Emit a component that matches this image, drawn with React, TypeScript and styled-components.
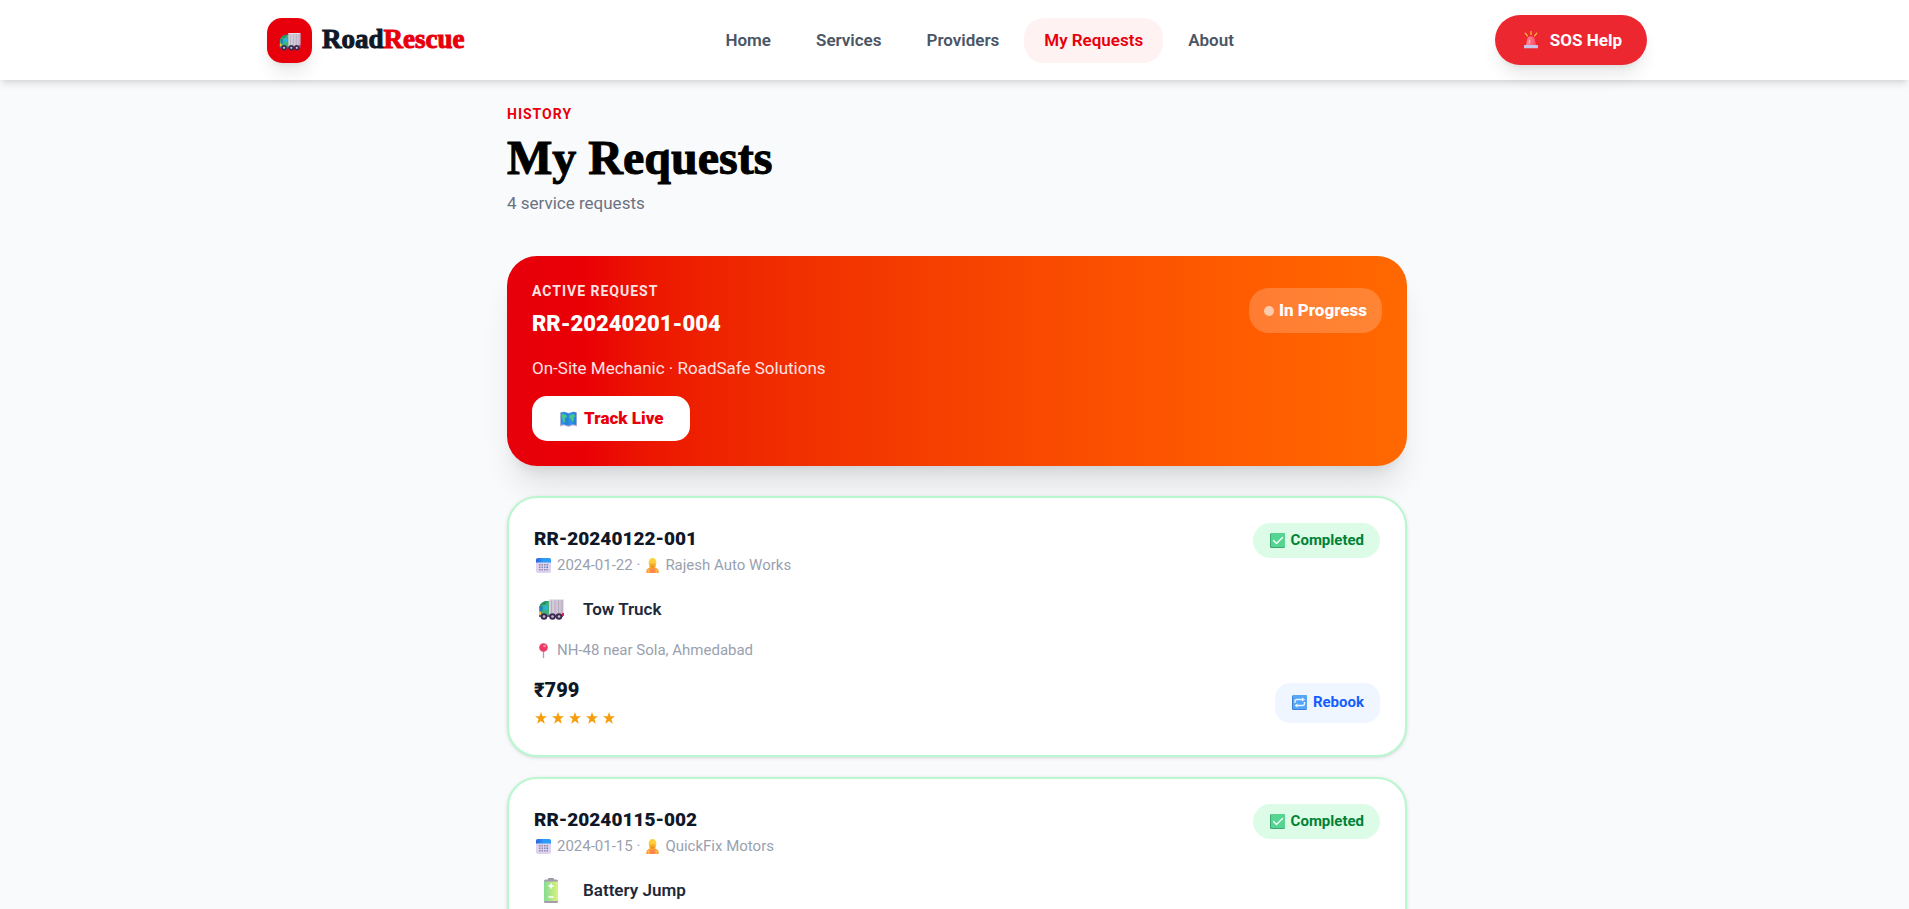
import React from 'react';
import styled, { createGlobalStyle } from 'styled-components';

const GlobalStyle = createGlobalStyle`
  *, *::before, *::after { box-sizing: border-box; }
  html { overflow: hidden auto; scrollbar-width: none; }
  body {
    margin: 0;
    background: #f9fafb;
    color: #101828;
    font-family: Roboto, "Liberation Sans", sans-serif;
    font-size: 17px;
    line-height: 25px;
  }
  h1, h2, p, ul { margin: 0; padding: 0; }
  button { font: inherit; border: 0; cursor: pointer; }
  a { text-decoration: none; color: inherit; }
  svg { display: block; flex: none; }
`;

/* ---------- icons ---------- */

const TruckIcon = ({ size }: { size: number }) => (
  <svg width={size} height={(size * 21) / 26} viewBox="0 0 26 21" aria-hidden="true">
    <defs>
      <linearGradient id="truck-box" x1="0" x2="1">
        <stop offset="0" stopColor="#d8d0dc" />
        <stop offset="1" stopColor="#c9bfd0" />
      </linearGradient>
    </defs>
    <path d="M1 17V9.500C1 5.500 5 2 9 2h3v15z" fill="#3fb27c" />
    <path d="M1 9.500C1.500 5.500 5 2 9 2h1L7 6H4z" fill="#2b8f6b" />
    <path d="M2 7.500 4.500 7v5L2 13z" fill="#1b80c4" />
    <path d="M6.500 6.500H9.500v4.500H6.500z" fill="#28b5ee" />
    <path d="M1 12.500h2v3.500H1z" fill="#f9c23c" />
    <path d="M1 16h24v2H1z" fill="#6b5b80" />
    <rect x="11" y="0" width="14.500" height="16" rx="1" fill="url(#truck-box)" />
    <path d="M13.500 1.500v13M17 1.500v13M20.500 1.500v13M24 1.500v13" stroke="#b8adc2" strokeWidth="1" />
    <path d="M11 0.500h14" stroke="#e9e3ee" />
    <path d="M24 14h2v3h-2z" fill="#e0245e" />
    {[6, 14.500, 21].map((x) => (
      <g key={x}>
        <circle cx={x} cy="17.500" r="3.300" fill="#3c2b52" />
        <circle cx={x} cy="17.500" r="1.300" fill="#c9bfd0" />
      </g>
    ))}
  </svg>
);

const BatteryIcon = () => (
  <svg width="14" height="25" viewBox="0 0 14 25" aria-hidden="true">
    <defs>
      <linearGradient id="battery" x1="0" x2="1">
        <stop offset="0" stopColor="#86dc92" />
        <stop offset="1" stopColor="#daf27e" />
      </linearGradient>
    </defs>
    <rect x="4" y="0" width="6" height="3" rx="1" fill="#9a9a9e" />
    <rect x="0" y="1.500" width="14" height="23.500" rx="1.500" fill="#a79bb0" />
    <rect x="0" y="3.500" width="14" height="19.500" fill="url(#battery)" />
    <path d="M5 8h4M7 6v4M5 19h4" stroke="#fff" strokeWidth="1.600" strokeLinecap="round" />
  </svg>
);

const SirenIcon = () => (
  <svg width="14" height="18" viewBox="0 0 14 18" aria-hidden="true">
    <defs>
      <linearGradient id="siren" x1="0" x2="1">
        <stop offset="0" stopColor="#ff8a94" />
        <stop offset="1" stopColor="#ff4d6a" />
      </linearGradient>
    </defs>
    <path d="M7 .5v3M1.200 2.200l2.200 2.600M12.800 2.200l-2.200 2.600" stroke="#fcc53a" strokeWidth="1.200" strokeLinecap="round" />
    <path d="M2 14.500 3.200 8.500C3.700 6.500 5 5.300 7 5.300s3.300 1.200 3.800 3.200L12 14.500z" fill="url(#siren)" />
    <path d="M5 12.500 5.800 9" stroke="#ffc0c8" />
    <rect x="0" y="14" width="14" height="3.300" rx=".6" fill="#c8c3e8" />
  </svg>
);

const MapIcon = () => (
  <svg width="17" height="16" viewBox="0 0 17 16" aria-hidden="true">
    <path d="M0 1.500 4 .5l4.500 1.500L13 .5l4 1v14L13 14.500 8.500 16 4 14.500 0 15.500z" fill="#c3b8d8" />
    <path d="M.8 1.500 4 1l4.500 1.500L13 1l3.200.5v12.500L13 13.300l-4.500 1.500L4 13.300.8 14z" fill="#2f8fe8" />
    <path d="M4 1l4.500 1.500v12.300L4 13.300zM13 1l3.200.5v12.500l-3.200-.7z" fill="#1f78d0" opacity=".6" />
    <path d="M1.500 3 6 3.500 7 6 4.500 7.500 5.500 10 4 12 2.500 8zM9.500 4.500 14 3l1.500 2.500-2 1L14 9l-1.500 2.500L11 8 9.500 7z" fill="#45c98a" />
  </svg>
);

const CalendarIcon = () => (
  <svg width="15" height="15" viewBox="0 0 15 15" aria-hidden="true">
    <defs>
      <linearGradient id="cal-head" x1="0" x2="1">
        <stop offset="0" stopColor="#2b62e3" />
        <stop offset=".5" stopColor="#2b9cf8" />
      </linearGradient>
    </defs>
    <rect width="15" height="15" rx="2" fill="#ddd3ee" />
    <path d="M0 4.500V2a2 2 0 0 1 2-2h11a2 2 0 0 1 2 2v2.500z" fill="url(#cal-head)" />
    {[6.500, 9, 11.500].map((y) =>
      [3, 5.500, 8, 10.500].map((x) => (
        <rect key={`${x}-${y}`} x={x} y={y - 0.500} width="1.500" height="1.500" fill={x > 10 && y === 9 ? '#1d8df5' : '#9488ab'} />
      )),
    )}
  </svg>
);

const WorkerIcon = () => (
  <svg width="13" height="15" viewBox="0 0 13 15" aria-hidden="true">
    <path d="M.3 15v-1.500C.3 11.500 2 10 4 9.500h5c2 .5 3.700 2 3.700 4V15z" fill="#ff9a4d" />
    <path d="M2.500 15v-4M10.500 15v-4" stroke="#ffb83d" strokeWidth="1.300" />
    <path d="M4.500 10h4v5h-4z" fill="#ff8152" />
    <ellipse cx="6.500" cy="6.800" rx="3.300" ry="4.200" fill="#f7a826" />
    <path d="M2.500 5.500C2.500 2 4.200 0 6.500 0s4 2 4 5.500z" fill="#fdd03b" />
    <path d="M5.500 8.800h2" stroke="#c9702a" />
  </svg>
);

const PinIcon = () => (
  <svg width="9" height="15" viewBox="0 0 9 15" aria-hidden="true">
    <path d="M4.500 8v7" stroke="#a99fb5" strokeWidth="1.300" />
    <circle cx="4.500" cy="4.500" r="4.300" fill="#ee3a66" />
    <circle cx="5.500" cy="3" r="1.300" fill="#ff8da6" />
  </svg>
);

const CheckIcon = () => (
  <svg width="15" height="15" viewBox="0 0 15 15" aria-hidden="true">
    <rect width="15" height="15" rx="1.500" fill="#3ba873" />
    <rect x="1" y="0" width="14" height="14" rx="1" fill="#55d492" />
    <path d="m3.500 7.500 3 3 6-6" fill="none" stroke="#fff" strokeWidth="1.300" strokeLinecap="round" strokeLinejoin="round" />
  </svg>
);

const RepeatIcon = () => (
  <svg width="15" height="15" viewBox="0 0 15 15" aria-hidden="true">
    <rect width="15" height="15" rx="1.500" fill="#3f80d8" />
    <rect x="1" y="0" width="14" height="14" rx="1" fill="#55a6f6" />
    <path d="M3 8V6.500C3 5.300 3.800 4.500 5 4.500h6M12.500 7v1.500c0 1.200-.8 2-2 2h-6" fill="none" stroke="#eaf3ff" strokeWidth="1.400" />
    <path d="m10 2.500 3 2-3 2zM5.500 8.500l-3 2 3 2z" fill="#eaf3ff" />
  </svg>
);

const StarIcon = () => (
  <svg width="12" height="12" viewBox="0 0 12 12" aria-hidden="true">
    <path d="m6 0 1.500 4.200H12L8.400 7l1.400 4.800L6 9.100 2.200 11.800 3.600 7 0 4.200h4.500z" fill="#f59e0b" />
  </svg>
);

/* ---------- header ---------- */

const Header = styled.header`
  position: sticky;
  top: 0;
  z-index: 10;
  background: #fff;
  box-shadow: 0 5px 8px -1px rgba(0, 0, 0, 0.1), 0 3px 5px -3px rgba(0, 0, 0, 0.1);
  padding-left: 5px;
`;

const HeaderInner = styled.div`
  display: flex;
  justify-content: space-between;
  align-items: center;
  max-width: 1380px;
  height: 80px;
  margin: 0 auto;
`;

const Brand = styled.a`
  display: flex;
  align-items: center;
  gap: 10px;
`;

const BrandMark = styled.span`
  display: grid;
  place-items: center;
  width: 45px;
  height: 45px;
  padding-top: 4px;
  border-radius: 15px;
  background: #e7000b;
  box-shadow: 0 12px 18px -4px rgba(0, 0, 0, 0.1), 0 5px 7px -5px rgba(0, 0, 0, 0.1);
`;

const BrandName = styled.span`
  font: 700 27px/30px "Liberation Serif", serif;
  padding-bottom: 2px;
  -webkit-text-stroke: 1px currentColor;
`;

const BrandAccent = styled.span`
  color: #e7000b;
`;

const Nav = styled.nav`
  display: flex;
  gap: 5px;
`;

const NavLink = styled.a<{ $active?: boolean }>`
  padding: 10px 20px;
  border-radius: 20px;
  font-weight: 600;
  color: ${(p) => (p.$active ? '#e7000b' : '#4a5565')};
  background: ${(p) => (p.$active ? '#fef2f2' : 'transparent')};
`;

const SosButton = styled.button`
  display: flex;
  align-items: center;
  gap: 12px;
  height: 50px;
  padding: 0 25px 0 29px;
  border-radius: 25px;
  background: #ec2730;
  color: #fff;
  font-weight: 700;
  box-shadow: 0 12px 18px -4px rgba(0, 0, 0, 0.1), 0 5px 7px -5px rgba(0, 0, 0, 0.1);
`;

/* ---------- page ---------- */

const Page = styled.div`
  padding-left: 5px;
`;

const Main = styled.main`
  max-width: 900px;
  margin: 0 auto;
  padding: 24px 0 40px;
`;

const Eyebrow = styled.p`
  font-size: 14px;
  line-height: 20px;
  font-weight: 700;
  letter-spacing: 1px;
  text-transform: uppercase;
  color: #e7000b;
`;

const ActiveLabel = styled(Eyebrow)`
  color: #ffe2e2;
`;

const Title = styled.h1`
  margin-top: 9px;
  font: 700 48px/50px "Liberation Serif", serif;
  color: #000;
  -webkit-text-stroke: 1px currentColor;
`;

const Subtitle = styled.p`
  margin: 8px 0 40px;
  color: #6a7282;
`;

const ActiveCard = styled.section`
  margin-bottom: 30px;
  padding: 25px;
  border-radius: 30px;
  color: #fff;
  background: linear-gradient(to right in oklab, oklch(57.7% 0.245 27.325), oklch(70.5% 0.213 47.604));
  box-shadow: 0 25px 31px -6px rgba(0, 0, 0, 0.1), 0 10px 13px -8px rgba(0, 0, 0, 0.1);
`;

const CardTop = styled.div<{ $align: 'center' | 'flex-start' }>`
  display: flex;
  justify-content: space-between;
  align-items: ${(p) => p.$align};
`;

const ActiveId = styled.h2`
  margin-top: 6px;
  font-size: 22px;
  line-height: 33px;
  font-weight: 900;
`;

const ActiveInfo = styled.p`
  margin: 16px 0 15px;
  color: #ffe2e2;
`;

const ProgressPill = styled.span`
  display: flex;
  align-items: center;
  gap: 5px;
  height: 45px;
  padding: 0 15px;
  border-radius: 20px;
  background: rgba(255, 255, 255, 0.2);
  font-weight: 800;
`;

const ProgressDot = styled.span`
  width: 10px;
  height: 10px;
  border-radius: 50%;
  background: rgba(255, 255, 255, 0.6);
`;

const TrackButton = styled.button`
  display: flex;
  align-items: center;
  gap: 7px;
  height: 45px;
  padding: 0 26px 0 28px;
  border-radius: 15px;
  background: #fff;
  color: #e7000b;
  font-weight: 900;
`;

const List = styled.ul`
  display: grid;
  gap: 20px;
  list-style: none;
`;

const Card = styled.li`
  padding: 25px;
  border: 2px solid #b9f8cf;
  border-radius: 30px;
  background: #fff;
  box-shadow: 0 1px 4px rgba(0, 0, 0, 0.1), 0 1px 3px -1px rgba(0, 0, 0, 0.1);
`;

const RequestId = styled.h2`
  font-size: 19px;
  line-height: 32px;
  font-weight: 900;
`;

const Meta = styled.p`
  display: flex;
  align-items: center;
  gap: 6px;
  padding-left: 2px;
  font-size: 15px;
  line-height: 20px;
  color: #99a1af;
`;

const StatusPill = styled.span`
  display: flex;
  align-items: center;
  gap: 6px;
  height: 35px;
  padding: 0 16px 0 17px;
  border-radius: 18px;
  background: #dcfce7;
  color: #008236;
  font-size: 15px;
  font-weight: 700;
`;

const ServiceRow = styled.div`
  display: flex;
  align-items: center;
  gap: 16px;
  height: 40px;
  margin: 14px 0 11px;
  font-weight: 600;
  color: #1e2939;
`;

const ServiceIcon = styled.span`
  display: grid;
  place-items: center;
  width: 33px;
`;

const PinSlot = styled.span`
  display: grid;
  place-items: center;
  width: 15px;
`;

const CardBottom = styled.div`
  display: flex;
  justify-content: space-between;
  align-items: center;
  margin-top: 15px;
`;

const Price = styled.p`
  font-size: 20px;
  line-height: 30px;
  font-weight: 900;
`;

const Stars = styled.div`
  display: flex;
  align-items: center;
  gap: 5px;
  height: 25px;
  padding-left: 1px;
`;

const RebookButton = styled.button`
  display: flex;
  align-items: center;
  gap: 6px;
  height: 40px;
  padding: 0 16px 0 17px;
  border-radius: 15px;
  background: #eff6ff;
  color: #155dfc;
  font-size: 15px;
  font-weight: 700;
`;

const navItems = ['Home', 'Services', 'Providers', 'My Requests', 'About'];

const requests = [
  {
    id: 'RR-20240122-001',
    date: '2024-01-22',
    provider: 'Rajesh Auto Works',
    service: 'Tow Truck',
    icon: <TruckIcon size={26} />,
    place: 'NH-48 near Sola, Ahmedabad',
    price: '₹799',
  },
  {
    id: 'RR-20240115-002',
    date: '2024-01-15',
    provider: 'QuickFix Motors',
    service: 'Battery Jump',
    icon: <BatteryIcon />,
    place: 'SG Highway, Ahmedabad',
    price: '₹299',
  },
];

export default function App() {
  return (
    <>
      <GlobalStyle />
      <Header>
        <HeaderInner>
          <Brand href="#home">
            <BrandMark>
              <TruckIcon size={22} />
            </BrandMark>
            <BrandName>
              Road<BrandAccent>Rescue</BrandAccent>
            </BrandName>
          </Brand>
          <Nav>
            {navItems.map((item) => (
              <NavLink key={item} href="#" $active={item === 'My Requests'}>
                {item}
              </NavLink>
            ))}
          </Nav>
          <SosButton>
            <SirenIcon />
            SOS Help
          </SosButton>
        </HeaderInner>
      </Header>
      <Page>
        <Main>
          <Eyebrow>History</Eyebrow>
          <Title>My Requests</Title>
          <Subtitle>4 service requests</Subtitle>

          <ActiveCard>
            <CardTop $align="center">
              <div>
                <ActiveLabel>Active Request</ActiveLabel>
                <ActiveId>RR-20240201-004</ActiveId>
              </div>
              <ProgressPill>
                <ProgressDot />
                In Progress
              </ProgressPill>
            </CardTop>
            <ActiveInfo>On-Site Mechanic · RoadSafe Solutions</ActiveInfo>
            <TrackButton>
              <MapIcon />
              Track Live
            </TrackButton>
          </ActiveCard>

          <List>
            {requests.map((r) => (
              <Card key={r.id}>
                <CardTop $align="flex-start">
                  <div>
                    <RequestId>{r.id}</RequestId>
                    <Meta>
                      <CalendarIcon />
                      <span>{r.date} ·</span>
                      <WorkerIcon />
                      <span>{r.provider}</span>
                    </Meta>
                  </div>
                  <StatusPill>
                    <CheckIcon />
                    Completed
                  </StatusPill>
                </CardTop>
                <ServiceRow>
                  <ServiceIcon>{r.icon}</ServiceIcon>
                  {r.service}
                </ServiceRow>
                <Meta>
                  <PinSlot>
                    <PinIcon />
                  </PinSlot>
                  {r.place}
                </Meta>
                <CardBottom>
                  <div>
                    <Price>{r.price}</Price>
                    <Stars role="img" aria-label="5 out of 5 stars">
                      {[1, 2, 3, 4, 5].map((n) => (
                        <StarIcon key={n} />
                      ))}
                    </Stars>
                  </div>
                  <RebookButton>
                    <RepeatIcon />
                    Rebook
                  </RebookButton>
                </CardBottom>
              </Card>
            ))}
          </List>
        </Main>
      </Page>
    </>
  );
}
